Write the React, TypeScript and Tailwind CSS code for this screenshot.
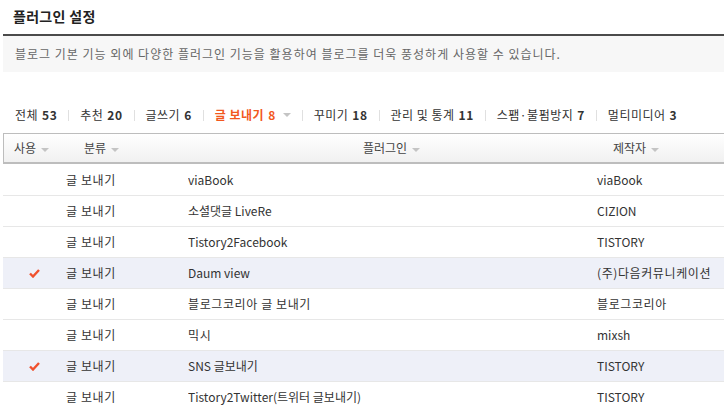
import { useState } from "react";

const TABS = [
  { name: "전체", count: 53 },
  { name: "추천", count: 20 },
  { name: "글쓰기", count: 6 },
  { name: "글 보내기", count: 8, active: true },
  { name: "꾸미기", count: 18 },
  { name: "관리 및 통계", count: 11 },
  { name: "스팸·불펌방지", count: 7 },
  { name: "멀티미디어", count: 3 },
];

const ROWS = [
  { on: false, name: "viaBook", maker: "viaBook" },
  { on: false, name: "소셜댓글 LiveRe", maker: "CIZION" },
  { on: false, name: "Tistory2Facebook", maker: "TISTORY" },
  { on: true, name: "Daum view", maker: "(주)다음커뮤니케이션" },
  { on: false, name: "블로그코리아 글 보내기", maker: "블로그코리아" },
  { on: false, name: "믹시", maker: "mixsh" },
  { on: true, name: "SNS 글보내기", maker: "TISTORY" },
  { on: false, name: "Tistory2Twitter(트위터 글보내기)", maker: "TISTORY" },
];

// hangul-only strings get a little extra spacing to match the wider bitmap font
const isKo = (s: string) => !/[A-Za-z]/.test(s);

const Caret = ({ gap = "ml-[5px]" }: { gap?: string }) => (
  <span className={`${gap} inline-block w-0 h-0 border-l-[4px] border-r-[4px] border-t-[4px] border-l-transparent border-r-transparent border-t-[#c4c4c4] align-middle`} />
);

const Check = () => (
  <svg width="11" height="9" viewBox="0 0 11 9">
    <path d="M1 4.5 L4 7.5 L10 1" fill="none" stroke="#f0512e" strokeWidth="2.4" strokeLinejoin="miter" />
  </svg>
);

export default function App() {
  const [tab, setTab] = useState(3);

  return (
    <div className="w-[724px] h-[414px] overflow-hidden bg-white text-[12px] text-[#333] font-['Noto_Sans_CJK_KR','Noto_Sans',sans-serif]">
      <h1 className="h-[34px] pl-[13px] pt-[6px] text-[14px] font-bold text-[#222] leading-[20px] tracking-[0.3px]">플러그인 설정</h1>
      <div className="ml-[3px] border-t-2 border-[#4b4b4b] bg-[#f7f7f7] h-[38px] pl-[12px] flex items-center text-[#666] tracking-[1px]">
        블로그 기본 기능 외에 다양한 플러그인 기능을 활용하여 블로그를 더욱 풍성하게 사용할 수 있습니다.
      </div>

      <ul className="flex items-center h-[61px] pl-[15px] pt-[25px] tracking-[0.5px]">
        {TABS.map((t, i) => (
          <li key={i} className="flex items-center">
            {i > 0 && <span className="mx-[11px] h-[11px] w-px bg-[#e0e0e0]" />}
            <button
              onClick={() => setTab(i)}
              className={`flex items-center ${tab === i ? "text-[#f2581e] font-bold" : "text-[#333]"}`}
            >
              {t.name}
              <b className="ml-[4px] font-bold">{t.count}</b>
              {tab === i && <Caret gap="ml-[7px]" />}
            </button>
          </li>
        ))}
      </ul>

      <div className="ml-[3px]">
        <div className="flex items-center h-[31px] border border-r-0 border-[#bdbdbd] border-b-2 bg-gradient-to-b from-white to-[#f1f1f1] text-[#444]">
          <span className="w-[80px] pl-[10px]">사용<Caret /></span>
          <span className="w-[279px]">분류<Caret /></span>
          <span className="w-[250px]">플러그인<Caret /></span>
          <span>제작자<Caret /></span>
        </div>
        {ROWS.map((r, i) => (
          <div
            key={i}
            className={`flex items-center h-[31px] ${i > 0 ? "border-t border-[#e7e7e7]" : ""} ${r.on ? "bg-[#eef0f8]" : ""}`}
          >
            <span className="w-[63px] flex justify-center">{r.on && <Check />}</span>
            <span className="w-[122px] tracking-[0.6px]">글 보내기</span>
            <span className={`w-[409px] whitespace-nowrap overflow-hidden ${isKo(r.name) ? "tracking-[0.6px]" : ""}`}>{r.name}</span>
            <span className={`whitespace-nowrap ${isKo(r.maker) ? "tracking-[0.6px]" : ""}`}>{r.maker}</span>
          </div>
        ))}
      </div>
    </div>
  );
}
